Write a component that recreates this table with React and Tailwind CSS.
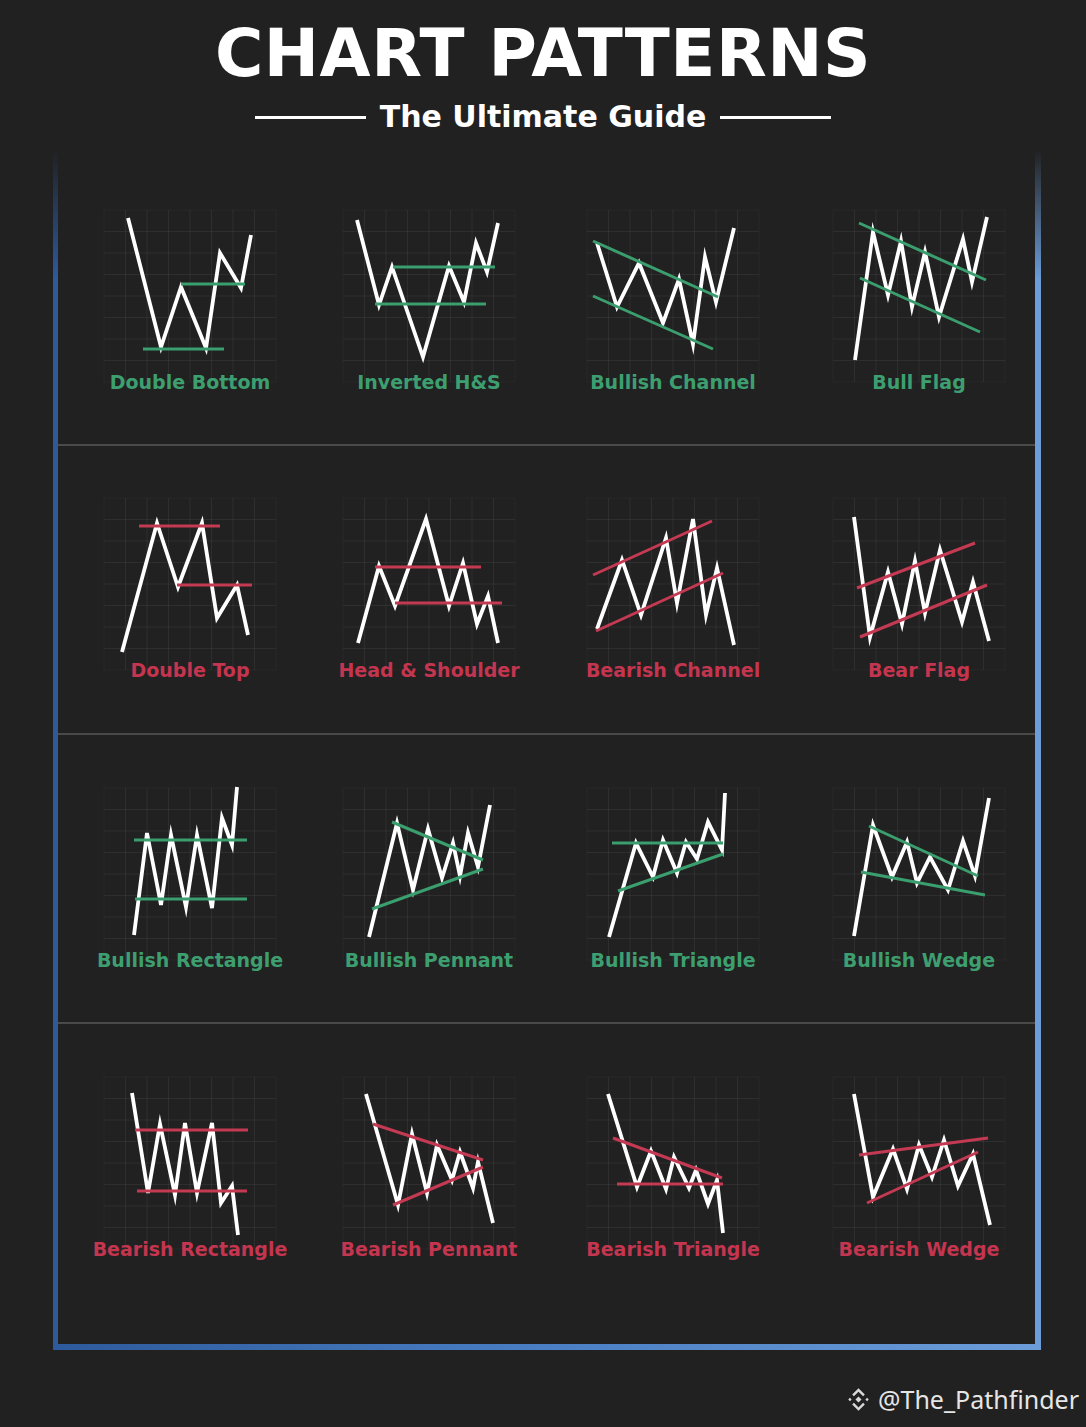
import React from 'react';

const charts = [
  { name: 'Double Bottom', c: 'g', w: [[24,8],[57,137],[77,77],[102,138],[116,43],[137,78],[147,25]], l: [[39,139,120,139],[77,74,141,74]] },
  { name: 'Inverted H&S', c: 'g', w: [[14,10],[36,95],[49,57],[80,147],[106,56],[121,92],[133,33],[144,62],[155,13]], l: [[50,57,152,57],[32,94,143,94]] },
  { name: 'Bullish Channel', c: 'g', w: [[10,33],[30,97],[52,53],[76,113],[92,69],[106,134],[118,47],[129,92],[147,18]], l: [[6,31,131,87],[6,86,126,139]] },
  { name: 'Bull Flag', c: 'g', w: [[22,150],[40,22],[55,85],[68,31],[79,97],[92,42],[106,107],[130,29],[139,72],[154,7]], l: [[26,13,153,70],[27,68,147,122]] },
  { name: 'Double Top', c: 'r', w: [[18,154],[53,25],[74,89],[98,25],[113,120],[133,87],[144,137]], l: [[35,28,116,28],[73,87,148,87]] },
  { name: 'Head & Shoulder', c: 'r', w: [[15,145],[36,68],[52,108],[83,21],[106,108],[120,65],[134,126],[145,98],[155,145]], l: [[32,69,138,69],[52,105,159,105]] },
  { name: 'Bearish Channel', c: 'r', w: [[10,131],[35,62],[54,117],[79,40],[90,105],[106,21],[119,117],[130,70],[147,147]], l: [[6,77,125,23],[9,133,136,75]] },
  { name: 'Bear Flag', c: 'r', w: [[21,19],[37,139],[55,74],[69,126],[82,63],[92,115],[107,52],[129,124],[140,84],[156,143]], l: [[24,90,142,45],[27,139,154,87]] },
  { name: 'Bullish Rectangle', c: 'g', w: [[30,147],[43,45],[57,117],[67,47],[82,119],[93,47],[108,120],[118,30],[128,57],[133,-1]], l: [[30,52,143,52],[31,111,143,111]] },
  { name: 'Bullish Pennant', c: 'g', w: [[26,149],[54,35],[70,102],[85,41],[99,90],[110,55],[117,88],[125,45],[135,79],[147,17]], l: [[49,34,140,72],[29,121,140,81]] },
  { name: 'Bullish Triangle', c: 'g', w: [[22,149],[49,55],[66,89],[76,52],[90,85],[99,54],[110,71],[121,34],[135,62],[138,5]], l: [[25,55,136,55],[31,103,136,66]] },
  { name: 'Bullish Wedge', c: 'g', w: [[21,148],[40,37],[59,89],[74,54],[84,95],[97,69],[115,102],[130,53],[142,88],[156,10]], l: [[36,38,145,88],[28,84,152,107]] },
  { name: 'Bearish Rectangle', c: 'r', w: [[28,16],[44,116],[56,47],[71,118],[81,46],[93,116],[108,46],[117,126],[128,109],[134,158]], l: [[31,53,144,53],[33,114,143,114]] },
  { name: 'Bearish Pennant', c: 'r', w: [[23,17],[55,128],[69,57],[84,116],[94,68],[109,103],[117,75],[130,111],[135,85],[150,146]], l: [[30,47,140,83],[50,128,140,90]] },
  { name: 'Bearish Triangle', c: 'r', w: [[21,17],[50,110],[64,74],[79,112],[87,80],[102,111],[109,93],[121,127],[130,103],[136,156]], l: [[26,61,135,101],[30,107,136,107]] },
  { name: 'Bearish Wedge', c: 'r', w: [[21,17],[40,120],[60,72],[74,112],[86,68],[99,100],[111,63],[125,109],[140,77],[157,148]], l: [[26,78,155,61],[34,126,145,75]] },
];

const GREEN = '#3b9e6e';
const RED = '#c43a53';
const colGaps = ['', 'ml-[67px]', 'ml-[72px]', 'ml-[74px]'];

function Chart({ chart, className }) {
  const color = chart.c === 'g' ? GREEN : RED;
  const ticks = [0, 1, 2, 3, 4, 5, 6, 7, 8].map((i) => i * 21.5);
  return (
    <div className={'flex w-[172px] flex-col items-center ' + className}>
      <svg width="172" height="172" viewBox="0 0 172 172" className="overflow-visible">
        {ticks.map((t, i) => (
          <line key={'v' + i} x1={t} y1="0" x2={t} y2="172" stroke="#ffffff" strokeOpacity={i === 0 || i === 8 ? 0.035 : 0.06} strokeWidth="1" />
        ))}
        {ticks.map((t, i) => (
          <line key={'h' + i} x1="0" y1={t} x2="172" y2={t} stroke="#ffffff" strokeOpacity={i === 0 || i === 8 ? 0.035 : 0.06} strokeWidth="1" />
        ))}
        <polyline
          points={chart.w.map((p) => p.join(',')).join(' ')}
          fill="none"
          stroke="#ffffff"
          strokeWidth="3.8"
          strokeLinejoin="miter"
          strokeMiterlimit="6"
        />
        {chart.l.map((ln, i) => (
          <line key={i} x1={ln[0]} y1={ln[1]} x2={ln[2]} y2={ln[3]} stroke={color} strokeWidth="3" />
        ))}
      </svg>
      <div
        className={
          'mt-[-12px] whitespace-nowrap text-[19px] font-bold leading-[24px] ' +
          (chart.c === 'g' ? 'text-[#3d9f70]' : 'text-[#c4354f]')
        }
        style={{ fontFamily: '"DejaVu Sans", sans-serif' }}
      >
        {chart.name}
      </div>
    </div>
  );
}

function Row({ items, className }) {
  return (
    <div className={'flex pl-[46px] ' + className}>
      {items.map((c, i) => (
        <Chart key={c.name} chart={c} className={colGaps[i]} />
      ))}
    </div>
  );
}

function BinanceIcon() {
  return (
    <svg width="27" height="27" viewBox="0 0 24 24" fill="#d9d9d9">
      <polygon points="12,9.3 14.7,12 12,14.7 9.3,12" />
      <polygon points="12,2 17.6,7.6 16.1,9.1 12,5 7.9,9.1 6.4,7.6" />
      <polygon points="12,22 17.6,16.4 16.1,14.9 12,19 7.9,14.9 6.4,16.4" />
      <polygon points="4.4,10.5 5.9,12 4.4,13.5 2.9,12" />
      <polygon points="19.6,10.5 21.1,12 19.6,13.5 18.1,12" />
    </svg>
  );
}

export default function App() {
  return (
    <div className="h-[1427px] w-[1086px] overflow-hidden bg-[#212121]" style={{ fontFamily: '"DejaVu Sans", sans-serif' }}>
      <div className="flex flex-col items-center pt-[21px]">
        <h1 className="text-[66px] font-bold leading-[66px] tracking-[0.5px] text-white">CHART PATTERNS</h1>
        <div className="mt-[15px] flex items-center gap-[14px]">
          <div className="h-[3px] w-[111px] bg-white" />
          <div className="text-[30px] font-bold leading-[30px] text-white">The Ultimate Guide</div>
          <div className="h-[3px] w-[111px] bg-white" />
        </div>
      </div>
      <div className="ml-[53px] mt-[18px] w-[988px] bg-[linear-gradient(to_bottom,#212121_0px,rgba(33,33,33,0)_130px),linear-gradient(to_right,#2d5a9c,#4a7fc4_50%,#6c9dd9)] pb-[6px] pl-[5px] pr-[6px]">
        <div className="bg-[#212121]">
          <Row items={charts.slice(0, 4)} className="h-[294px] pt-[60px]" />
          <div className="h-[2px] bg-[#4a4a4a]" />
          <Row items={charts.slice(4, 8)} className="h-[287px] pt-[52px]" />
          <div className="h-[2px] bg-[#4a4a4a]" />
          <Row items={charts.slice(8, 12)} className="h-[287px] pt-[53px]" />
          <div className="h-[2px] bg-[#4a4a4a]" />
          <Row items={charts.slice(12, 16)} className="h-[320px] pt-[53px]" />
        </div>
      </div>
      <div className="mt-[35px] flex items-center justify-end gap-[6px] pr-[7px]">
        <BinanceIcon />
        <span className="text-[25px] leading-[28px] text-[#e6e6e6]" style={{ fontFamily: '"Noto Sans", sans-serif' }}>
          @The_Pathfinder
        </span>
      </div>
    </div>
  );
}
